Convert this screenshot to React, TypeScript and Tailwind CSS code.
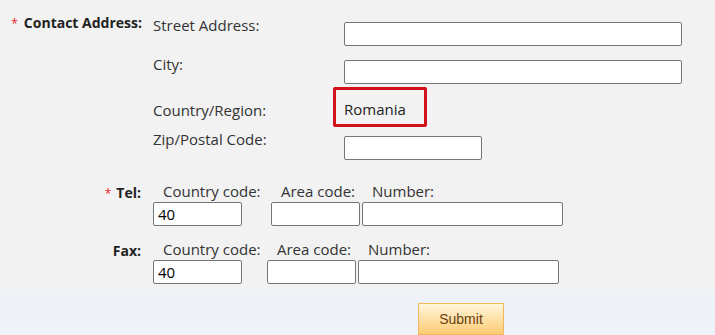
import React from "react";

const font = { fontFamily: '"Open Sans", "Liberation Sans", sans-serif' };

function Field({ w, mt, value }: { w: string; mt?: string; value?: string }) {
  return (
    <input
      readOnly
      defaultValue={value}
      className={`${w} ${mt ?? ""} h-[24px] shrink-0 rounded-[2px] border border-[#767676] bg-white px-[4px] text-[15px] text-black outline-none`}
    />
  );
}

function PhoneRow({
  label,
  required,
  c1,
  c2,
}: {
  label: string;
  required?: boolean;
  c1: string;
  c2: string;
}) {
  return (
    <div className="flex">
      <div className="w-[153px] shrink-0 pr-[12px] pt-[2px] text-right text-[14px] font-bold leading-[20px] text-[#222]">
        {required && <span className="mr-[5px] text-[12px] font-normal text-[#e3262b]">*</span>}
        {label}
      </div>
      <div className="flex">
        <div className={`${c1} flex shrink-0 flex-col`}>
          <div className="h-[21px] whitespace-nowrap pl-[10px] text-[15px] leading-[20px] text-[#333]">Country code:</div>
          <Field w="w-[89px]" value="40" />
        </div>
        <div className={`${c2} flex shrink-0 flex-col`}>
          <div className="h-[21px] whitespace-nowrap pl-[10px] text-[15px] leading-[20px] text-[#333]">Area code:</div>
          <Field w="w-[89px]" />
        </div>
        <div className="flex shrink-0 flex-col">
          <div className="h-[21px] whitespace-nowrap pl-[10px] text-[15px] leading-[20px] text-[#333]">Number:</div>
          <Field w="w-[201px]" />
        </div>
      </div>
    </div>
  );
}

export default function App() {
  return (
    <div className="h-[335px] w-[715px] overflow-hidden bg-[#f2f2f2]" style={font}>
      <div className="pt-[13px]">
        <div className="flex">
          <div className="w-[153px] shrink-0 pr-[11px] text-right text-[14px] font-bold leading-[20px] text-[#222]">
            <span className="mr-[6px] text-[12px] font-normal text-[#e3262b]">*</span>
            Contact Address:
          </div>
          <div className="flex flex-col pt-[2px] text-[15px] leading-[20px] text-[#333]">
            <div className="flex h-[39px]">
              <div className="w-[191px] shrink-0">Street Address:</div>
              <Field w="w-[338px]" mt="mt-[7px]" />
            </div>
            <div className="flex h-[33px]">
              <div className="w-[191px] shrink-0">City:</div>
              <Field w="w-[338px]" mt="mt-[6px]" />
            </div>
            <div className="flex h-[42px]">
              <div className="mt-[13px] w-[180px] shrink-0">Country/Region:</div>
              <div className="flex h-[40px] w-[94px] items-center rounded-[2px] border-[3px] border-[#d0121b] pl-[8px] pt-[4px] text-[#222]">
                Romania
              </div>
            </div>
            <div className="flex h-[31px]">
              <div className="w-[191px] shrink-0">Zip/Postal Code:</div>
              <Field w="w-[138px]" mt="mt-[7px]" />
            </div>
          </div>
        </div>
        <div className="mt-[21px] flex flex-col gap-[13px]">
          <PhoneRow label="Tel:" required c1="w-[118px]" c2="w-[91px]" />
          <PhoneRow label="Fax:" c1="w-[114px]" c2="w-[91px]" />
        </div>
      </div>
      <div className="mt-[4px] h-[60px] bg-gradient-to-b from-[#f2f2f2] via-[#eef2f7] via-[8px] to-[#eef3f9] pt-[15px]">
        <div className="flex pl-[418px]">
          <button
            className="h-[32px] w-[86px] border border-[#f2b75a] bg-gradient-to-b from-[#fff5d9] to-[#fccc72] text-[14px] text-[#6b3d10]"
            style={{ fontFamily: '"Liberation Sans", Arial, sans-serif' }}
          >
            Submit
          </button>
        </div>
      </div>
    </div>
  );
}
